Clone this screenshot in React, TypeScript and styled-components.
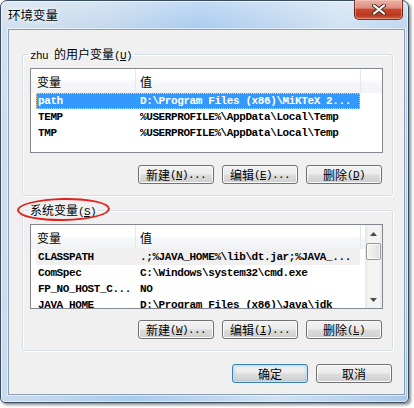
import React from "react";
import styled, { createGlobalStyle } from "styled-components";

const Global = createGlobalStyle`
  html, body { margin: 0; padding: 0; background: #ffffff; }
  body { width: 414px; height: 408px; overflow: hidden; font-family: "Noto Sans CJK SC", "Liberation Sans", sans-serif; }
  * { box-sizing: border-box; }
`;

const CJK = `"Noto Sans CJK SC", "Liberation Sans", sans-serif`;

const Page = styled.div`
  width: 414px;
  height: 408px;
  background: #ffffff;
`;

const Window = styled.div`
  width: 409px;
  height: 403px;
  border: 1px solid #3a4c61;
  border-radius: 7px 7px 5px 5px;
  background:
    linear-gradient(180deg, rgba(255, 255, 255, 0.3) 0px, rgba(255, 255, 255, 0) 30px),
    linear-gradient(100deg, #d2e0ee 0%, #c4d8ed 22%, #a8cbef 42%, #bcd5ef 58%, #d0e2f4 72%, #a9c8ea 100%);
  box-shadow: 2px 2px 3px rgba(0, 0, 0, 0.45), inset 0 0 0 1px rgba(255, 255, 255, 0.6);
  display: flex;
  flex-direction: column;
`;

const TitleBar = styled.div`
  height: 28px;
  display: flex;
  justify-content: space-between;
  align-items: flex-start;
  padding: 0 5px 0 7px;
  flex-shrink: 0;
`;

const Title = styled.div`
  font-family: ${CJK};
  font-size: 12.5px;
  line-height: 16px;
  padding-top: 6px;
  color: #000;
  text-shadow: 0 0 6px rgba(255, 255, 255, 0.95), 0 0 3px rgba(255, 255, 255, 0.9);
`;

const CloseButton = styled.div`
  width: 49px;
  height: 20px;
  margin-top: -1px;
  border: 1px solid rgba(90, 30, 20, 0.85);
  border-top: none;
  border-radius: 0 0 5px 5px;
  background: linear-gradient(180deg, #ebb2a5 0%, #dd8e7e 42%, #c8462c 50%, #b8381e 80%, #d06240 100%);
  box-shadow: inset 0 0 0 1px rgba(255, 210, 200, 0.45);
  display: flex;
  align-items: center;
  justify-content: center;
`;

const Body = styled.div`
  flex: 1;
  display: flex;
  padding: 0 6px 7px 7px;
`;

const Client = styled.div`
  flex: 1;
  display: flex;
  flex-direction: column;
  background: #f0f0f0;
  border: 1px solid #8a9fb6;
  box-shadow: 0 0 0 1px rgba(255, 255, 255, 0.55);
  padding: 18px 11px 0 13px;
`;

const Group = styled.fieldset<{ $top?: number }>`
  margin: ${(p) => p.$top ?? 0}px 0 0 0;
  padding: 8px 9px 11px 7px;
  border: 1px solid #d5dfe5;
  border-radius: 3px;
  box-shadow: inset 1px 1px 0 #ffffff, 1px 1px 0 #ffffff;
  min-width: 0;
`;

const Legend = styled.legend`
  position: relative;
  height: 12px;
  padding: 0 2px;
  margin-left: -2px;
  font-family: ${CJK};
  font-size: 12px;
  line-height: 12px;
  color: #000;
  white-space: nowrap;
`;

const Latin = styled.span`
  font-family: "Liberation Mono", monospace;
  font-size: 11px;
  line-height: 12px;
  letter-spacing: -0.6px;
`;

const Ellipse = styled.div`
  position: absolute;
  left: -11px;
  top: -6px;
  width: 93px;
  height: 23px;
  border: 2px solid #e3211c;
  border-radius: 50%;
  transform: rotate(-1deg);
  pointer-events: none;
`;

const List = styled.div`
  height: 85px;
  border: 1px solid #828790;
  background: #ffffff;
  display: flex;
  overflow: hidden;
`;

const ListMain = styled.div`
  flex: 1;
  min-width: 0;
  display: flex;
  flex-direction: column;
`;

const Header = styled.div`
  height: 24px;
  flex-shrink: 0;
  display: flex;
  background: linear-gradient(180deg, #ffffff 0%, #ffffff 45%, #f6f7f8 55%, #f2f3f5 100%);
`;

const HeadCell = styled.div<{ $w?: number; $pad?: number }>`
  ${(p) => (p.$w ? `width: ${p.$w}px;` : "flex: 1;")}
  flex-shrink: 0;
  height: 24px;
  padding-left: ${(p) => p.$pad ?? 4}px;
  border-right: ${(p) => (p.$w ? "1px solid #e3e8ee" : "none")};
  font-family: ${CJK};
  font-size: 12px;
  line-height: 25px;
  color: #000;
`;

const Row = styled.div<{ $state?: "sel" | "dim" }>`
  display: flex;
  flex-shrink: 0;
  width: 324px;
  height: 16px;
  margin-left: 5px;
  font-family: "Liberation Mono", monospace;
  font-size: 11px;
  font-weight: bold;
  letter-spacing: -0.4px;
  line-height: 17px;
  color: ${(p) => (p.$state === "sel" ? "#ffffff" : "#000000")};
  background: ${(p) => (p.$state === "sel" ? "#3399ff" : p.$state === "dim" ? "#f0f0f0" : "transparent")};
  outline: ${(p) => (p.$state === "sel" ? "1px dotted #f3c98b" : "none")};
  outline-offset: -1px;
`;

const Cell = styled.div<{ $w: number; $pad: number }>`
  width: ${(p) => p.$w}px;
  padding-left: ${(p) => p.$pad}px;
  white-space: pre;
  overflow: hidden;
`;

const ScrollBar = styled.div`
  width: 17px;
  flex-shrink: 0;
  display: flex;
  flex-direction: column;
  background: linear-gradient(90deg, #e6e6e6 0%, #f2f2f2 20%, #f4f4f4 80%, #e9e9e9 100%);
`;

const ArrowBtn = styled.div`
  height: 17px;
  display: flex;
  align-items: center;
  justify-content: center;
`;

const Thumb = styled.div`
  height: 17px;
  margin: 1px 1px 0 1px;
  border: 1px solid #979797;
  border-radius: 2px;
  background: linear-gradient(90deg, #f4f4f4 0%, #ececec 50%, #dcdcdc 100%);
  box-shadow: inset 0 0 0 1px #fafafa;
`;

const Track = styled.div`
  flex: 1;
`;

const ButtonRow = styled.div<{ $top: number; $right?: number }>`
  display: flex;
  justify-content: flex-end;
  gap: 8px;
  margin-top: ${(p) => p.$top}px;
  padding-right: ${(p) => p.$right ?? 1}px;
`;

const Button = styled.button<{ $default?: boolean }>`
  width: 76px;
  height: 19px;
  padding: 0;
  border: 1px solid ${(p) => (p.$default ? "#3c7fb1" : "#707070")};
  border-radius: 3px;
  background: linear-gradient(180deg, #f2f2f2 0%, #ebebeb 48%, #dddddd 52%, #cfcfcf 100%);
  box-shadow: ${(p) =>
    p.$default ? "inset 0 0 0 1px #bfe4f9, inset 0 0 3px 1px rgba(120, 190, 235, 0.5)" : "inset 0 0 0 1px #fbfbfb"};
  font-family: ${CJK};
  font-size: 12px;
  line-height: 16px;
  color: #000;
  display: flex;
  align-items: center;
  justify-content: center;
  white-space: pre;
`;

const Arrow = ({ up }: { up?: boolean }) => (
  <svg width="7" height="4" viewBox="0 0 7 4">
    <polygon points={up ? "0,4 7,4 3.5,0" : "0,0 7,0 3.5,4"} fill="#4a4a4a" />
  </svg>
);

const CloseX = () => (
  <svg width="14" height="11" viewBox="0 0 14 11">
    <path d="M2 1.5 L12 9.5 M12 1.5 L2 9.5" stroke="#4a2a26" strokeWidth="4" strokeLinecap="round" />
    <path d="M2 1.5 L12 9.5 M12 1.5 L2 9.5" stroke="#ffffff" strokeWidth="2.2" strokeLinecap="round" />
  </svg>
);

type Item = { name: string; value: string; state?: "sel" | "dim" };

const userVars: Item[] = [
  { name: "path", value: "D:\\Program Files (x86)\\MiKTeX 2...", state: "sel" },
  { name: "TEMP", value: "%USERPROFILE%\\AppData\\Local\\Temp" },
  { name: "TMP", value: "%USERPROFILE%\\AppData\\Local\\Temp" },
];

const sysVars: Item[] = [
  { name: "CLASSPATH", value: ".;%JAVA_HOME%\\lib\\dt.jar;%JAVA_...", state: "dim" },
  { name: "ComSpec", value: "C:\\Windows\\system32\\cmd.exe" },
  { name: "FP_NO_HOST_C...", value: "NO" },
  { name: "JAVA_HOME", value: "D:\\Program Files (x86)\\Java\\jdk" },
];

const VarList = ({ items, scroll }: { items: Item[]; scroll?: boolean }) => (
  <List>
    <ListMain>
      <Header>
        <HeadCell $w={105} $pad={6}>变量</HeadCell>
        <HeadCell $w={225}>值</HeadCell>
        <HeadCell />
      </Header>
      {items.map((it) => (
        <Row key={it.name} $state={it.state}>
          <Cell $w={99} $pad={2}>{it.name}</Cell>
          <Cell $w={225} $pad={5}>{it.value}</Cell>
        </Row>
      ))}
    </ListMain>
    {scroll && (
      <ScrollBar>
        <ArrowBtn>
          <Arrow up />
        </ArrowBtn>
        <Thumb />
        <Track />
        <ArrowBtn>
          <Arrow />
        </ArrowBtn>
      </ScrollBar>
    )}
  </List>
);

const Mn = ({ k }: { k: string }) => (
  <Latin>
    (<u>{k}</u>)
  </Latin>
);

export default function App() {
  return (
    <Page>
      <Global />
      <Window>
        <TitleBar>
          <Title>环境变量</Title>
          <CloseButton>
            <CloseX />
          </CloseButton>
        </TitleBar>
        <Body>
          <Client>
            <Group>
              <Legend>
                <Latin>zhu </Latin>的用户变量<Mn k="U" />
              </Legend>
              <VarList items={userVars} />
              <ButtonRow $top={12}>
                <Button>
                  新建<Mn k="N" />
                  <Latin>...</Latin>
                </Button>
                <Button>
                  编辑<Mn k="E" />
                  <Latin>...</Latin>
                </Button>
                <Button>
                  删除<Mn k="D" />
                </Button>
              </ButtonRow>
            </Group>
            <Group $top={8}>
              <Legend>
                系统变量<Mn k="S" />
                <Ellipse />
              </Legend>
              <VarList items={sysVars} scroll />
              <ButtonRow $top={11}>
                <Button>
                  新建<Mn k="W" />
                  <Latin>...</Latin>
                </Button>
                <Button>
                  编辑<Mn k="I" />
                  <Latin>...</Latin>
                </Button>
                <Button>
                  删除<Mn k="L" />
                </Button>
              </ButtonRow>
            </Group>
            <ButtonRow $top={13} $right={1}>
              <Button $default>确定</Button>
              <Button>取消</Button>
            </ButtonRow>
          </Client>
        </Body>
      </Window>
    </Page>
  );
}
